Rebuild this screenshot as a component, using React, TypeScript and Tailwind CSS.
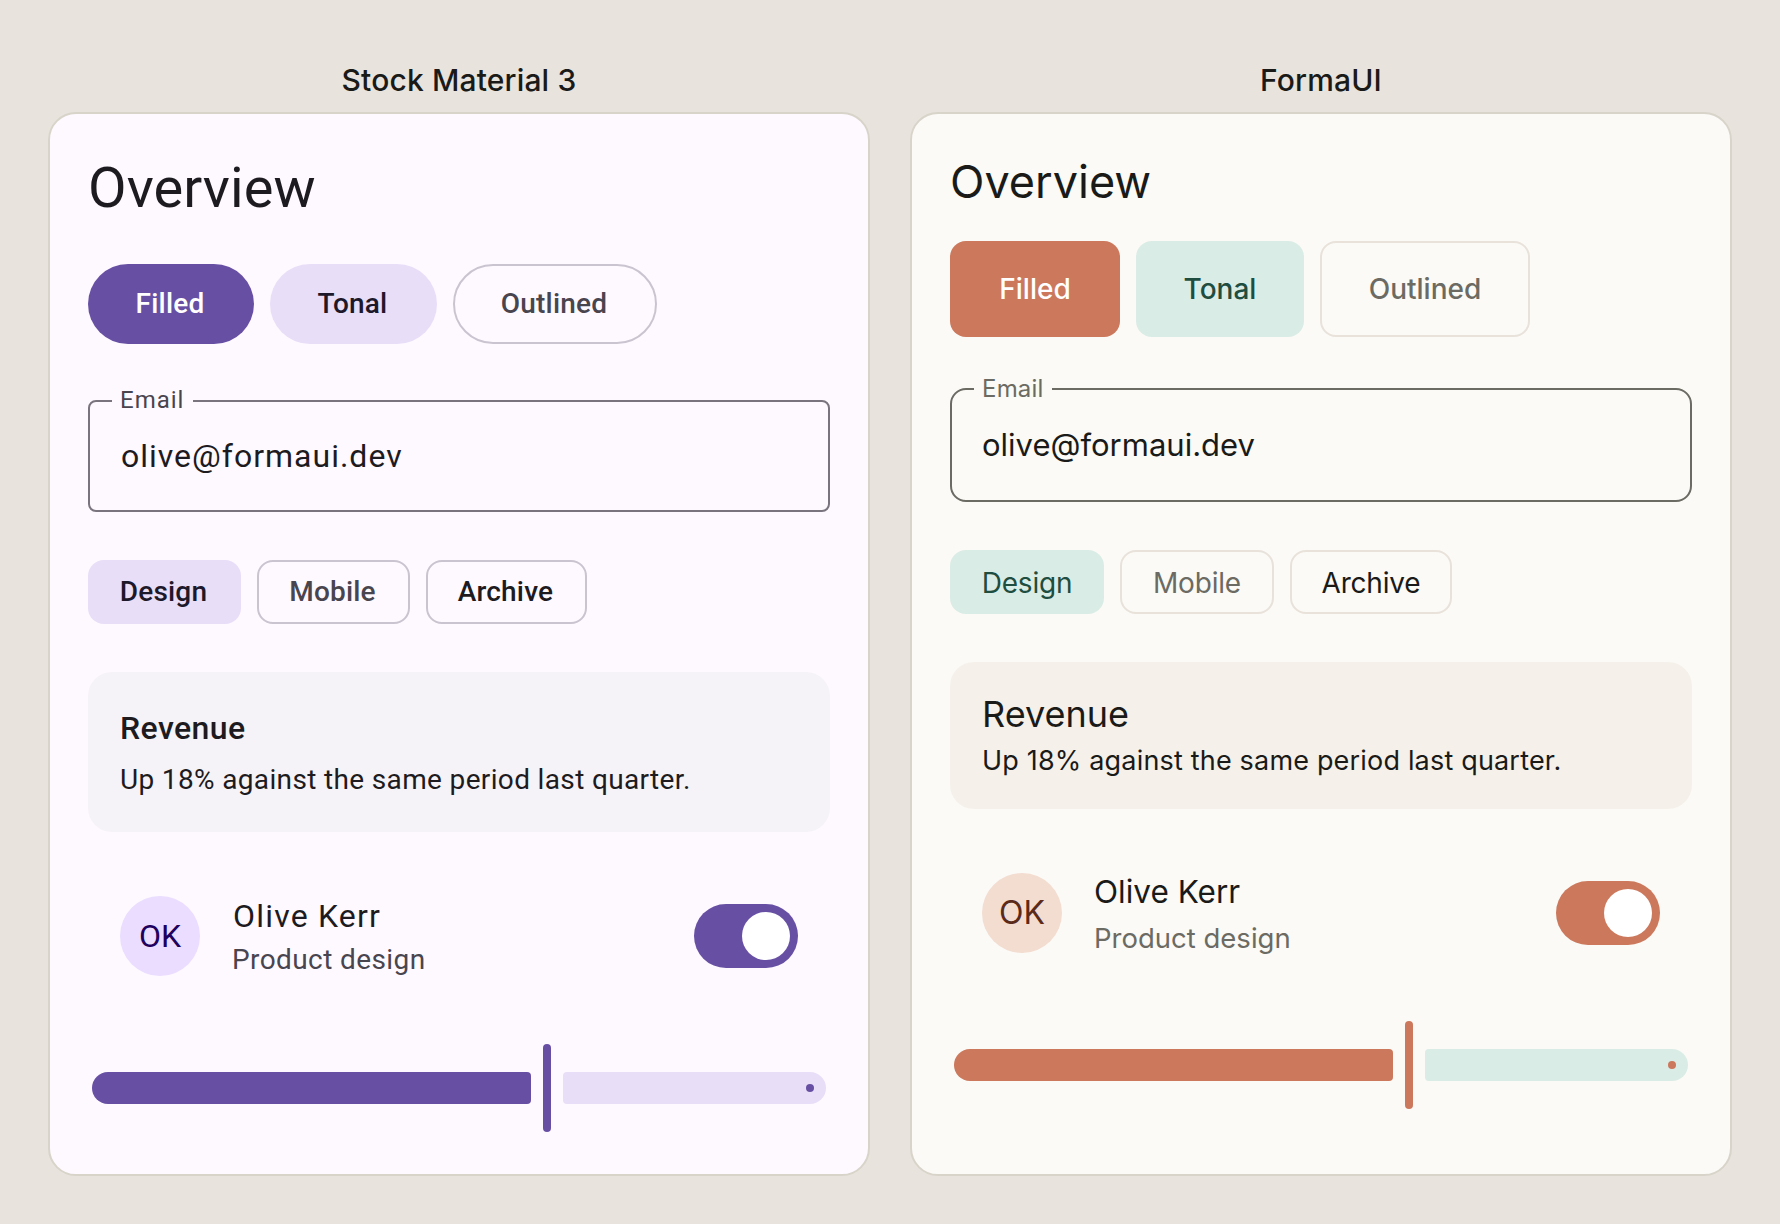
import React from 'react';

const stock = {
  label: 'Stock Material 3',
  card: 'bg-[#fef9ff] font-["Roboto",sans-serif]',
  heading: 'text-[56px] leading-[68px] tracking-[0.1px] text-[#1d1b20] h-[64px]',
  buttons: 'mt-[46px]',
  button: 'h-[80px] rounded-[40px] pr-[2px] text-[28px] font-medium tracking-[0.2px]',
  filledW: 'w-[166px]',
  tonalW: 'w-[167px]',
  outlinedW: 'w-[204px]',
  filled: 'bg-[#6750a4] text-white',
  tonal: 'bg-[#e8def8] text-[#1d192b]',
  outlined: 'border-2 border-[#cac4d0] text-[#49454f]',
  field: 'mt-[56px] h-[112px] rounded-[8px] border-[#79747e]',
  fieldLabel: '-top-[16px] pl-[8px] pr-[9px] bg-[#fef9ff] text-[#49454f] tracking-[1px]',
  fieldValue: 'pl-px text-[32px] tracking-[1px] text-[#1d1b20]',
  chips: 'mt-[48px]',
  chipW: ['w-[153px]', 'w-[153px]', 'w-[161px]'],
  chipOn: 'bg-[#e8def8] text-[#1d192b]',
  chipOff: 'border-2 border-[#cac4d0] text-[#49454f]',
  chipLast: 'border-2 border-[#cac4d0] text-[#1d1b20]',
  chipText: 'pr-[2px] font-medium tracking-[0.2px]',
  panel: 'mt-[48px] h-[160px] rounded-[24px] bg-[#f6f3f8] pt-[2px]',
  panelTitle: 'text-[32px] leading-[40px] font-medium tracking-[0.4px] text-[#1d1b20]',
  panelBody: 'mt-[14px] text-[28px] leading-[36px] tracking-[0.35px] text-[#1d1b20]',
  row: 'mt-[64px]',
  avatar: 'bg-[#eaddff] text-[#21005d]',
  who: 'pt-[2px]',
  name: 'text-[32px] text-[#1d1b20] tracking-[1.2px] pl-px',
  role: 'mt-[6px] text-[28px] text-[#49454f] tracking-[0.4px]',
  track: 'bg-[#6750a4]',
  slider: 'mt-[68px]',
  rest: 'bg-[#e8def8]',
};

const forma = {
  label: 'FormaUI',
  card: 'bg-[#fbfaf6] font-["Inter",sans-serif]',
  heading: 'text-[45px] leading-[56px] text-[#1a1a18] h-[56px]',
  buttons: 'mt-[31px]',
  button: 'h-[96px] rounded-[16px] text-[28px] font-[450]',
  filledW: 'w-[170px]',
  tonalW: 'w-[168px]',
  outlinedW: 'w-[210px]',
  filled: 'bg-[#cc785c] text-white',
  tonal: 'bg-[#daece6] text-[#1f4d3f]',
  outlined: 'border-2 border-[#e8e2da] text-[#6b6a63]',
  field: 'mt-[51px] h-[114px] rounded-[16px] border-[#6b6a63]',
  fieldLabel: '-top-[15px] px-[8px] bg-[#fbfaf6] text-[#6b6a63] tracking-[0.2px]',
  fieldValue: 'text-[31px] text-[#1a1a18]',
  chips: 'mt-[48px]',
  chipW: ['w-[154px]', 'w-[154px]', 'w-[162px]'],
  chipOn: 'bg-[#daece6] text-[#1f4d3f]',
  chipOff: 'border-2 border-[#e8e2da] text-[#6b6a63]',
  chipLast: 'border-2 border-[#e8e2da] text-[#1a1a18]',
  chipText: 'pt-[2px] tracking-[-0.2px]',
  panel: 'mt-[48px] h-[147px] rounded-[24px] bg-[#f5f1ea]',
  panelTitle: 'text-[36px] leading-[44px] text-[#1a1a18]',
  panelBody: 'mt-[7px] text-[27px] leading-[36px] tracking-[0.18px] text-[#1a1a18]',
  row: 'mt-[64px]',
  avatar: 'bg-[#f3dcd0] text-[#5a2a1a]',
  who: 'pt-[2px]',
  name: 'text-[31.5px] text-[#1a1a18]',
  role: 'mt-[8px] text-[27.5px] text-[#6b6a63]',
  track: 'bg-[#cc785c]',
  slider: 'mt-[68px]',
  rest: 'bg-[#daece6]',
};

function Demo({ t }: { t: typeof stock }) {
  return (
    <div className="flex w-[822px] flex-col">
      <h2 className='h-[64px] text-center font-["Inter",sans-serif] text-[30px] leading-[64px] font-medium tracking-[0.15px] text-[#1a1a18]'>
        {t.label}
      </h2>
      <section className={`h-[1064px] rounded-[28px] border-2 border-[#d8d4ca] px-[38px] pt-[40px] ${t.card}`}>
        <h1 className={t.heading}>Overview</h1>

        <div className={`flex gap-[16px] ${t.buttons}`}>
          <div className={`flex items-center justify-center ${t.button} ${t.filledW} ${t.filled}`}>Filled</div>
          <div className={`flex items-center justify-center ${t.button} ${t.tonalW} ${t.tonal}`}>Tonal</div>
          <div className={`flex items-center justify-center ${t.button} ${t.outlinedW} ${t.outlined}`}>Outlined</div>
        </div>

        <div className={`relative flex items-center border-2 px-[30px] ${t.field}`}>
          <span className={`absolute left-[22px] text-[24px] leading-[28px] ${t.fieldLabel}`}>Email</span>
          <span className={t.fieldValue}>olive@formaui.dev</span>
        </div>

        <div className={`flex gap-[16px] ${t.chips}`}>
          {['Design', 'Mobile', 'Archive'].map((c, i) => (
            <div
              key={c}
              className={`flex h-[64px] items-center justify-center rounded-[16px] text-[28px] ${t.chipW[i]} ${t.chipText} ${i === 0 ? t.chipOn : i === 1 ? t.chipOff : t.chipLast}`}
            >
              {c}
            </div>
          ))}
        </div>

        <div className={`flex flex-col justify-center px-[32px] ${t.panel}`}>
          <div className={t.panelTitle}>Revenue</div>
          <div className={t.panelBody}>Up 18% against the same period last quarter.</div>
        </div>

        <div className={`flex h-[80px] items-center px-[32px] ${t.row}`}>
          <div className={`flex h-[80px] w-[80px] items-center justify-center rounded-full text-[32px] ${t.avatar}`}>OK</div>
          <div className={`ml-[32px] flex-1 ${t.who}`}>
            <div className={`leading-[40px] ${t.name}`}>Olive Kerr</div>
            <div className={`leading-[36px] ${t.role}`}>Product design</div>
          </div>
          <div className={`flex h-[64px] w-[104px] items-center justify-end rounded-full pr-[8px] ${t.track}`}>
            <div className="h-[48px] w-[48px] rounded-full bg-white" />
          </div>
        </div>

        <div className={`flex items-center gap-[12px] px-[4px] ${t.slider}`}>
          <div className={`h-[32px] w-[439px] rounded-l-[16px] rounded-r-[4px] ${t.track}`} />
          <div className={`h-[88px] w-[8px] rounded-[4px] ${t.track}`} />
          <div className={`flex h-[32px] flex-1 items-center justify-end rounded-l-[4px] rounded-r-[16px] pr-[12px] ${t.rest}`}>
            <div className={`h-[8px] w-[8px] rounded-full ${t.track}`} />
          </div>
        </div>
      </section>
    </div>
  );
}

export default function App() {
  return (
    <div className="flex h-[1224px] w-[1780px] justify-center gap-[40px] bg-[#e8e4dd] pt-[48px]">
      <Demo t={stock} />
      <Demo t={forma} />
    </div>
  );
}
